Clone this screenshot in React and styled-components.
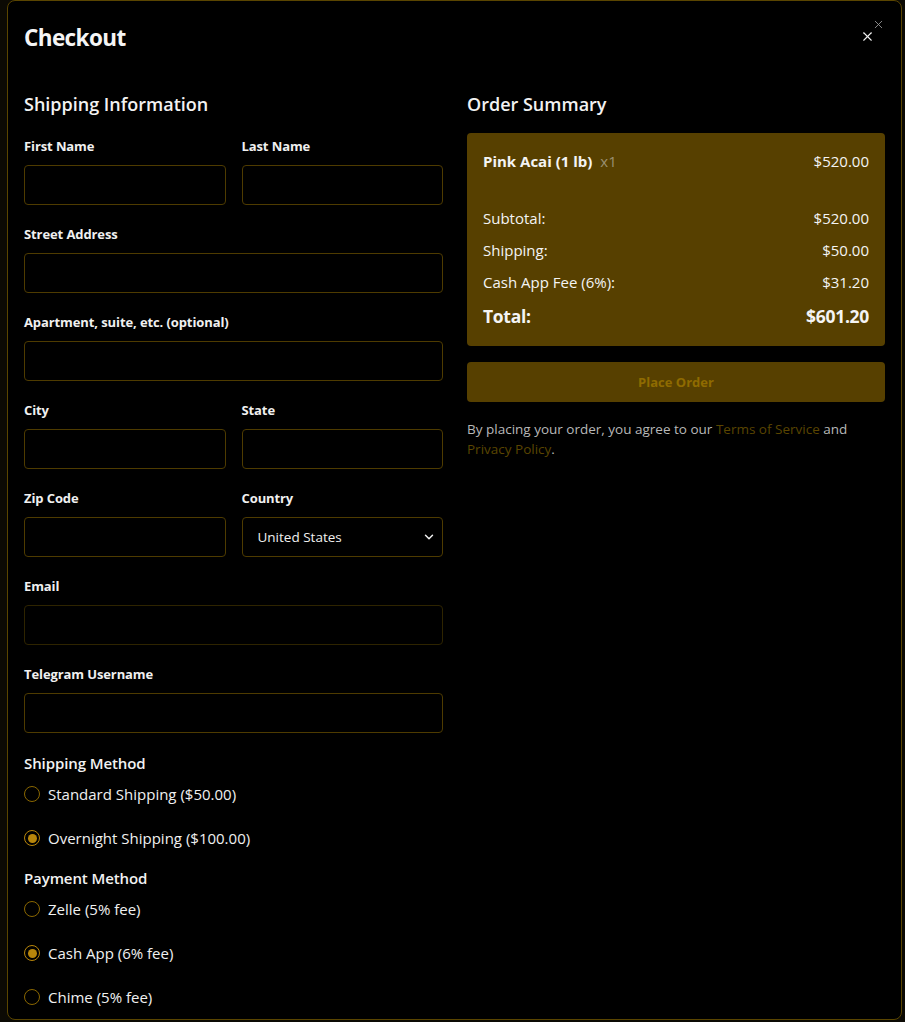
import React from 'react'
import styled, { createGlobalStyle } from 'styled-components'
import { X, ChevronDown } from 'lucide-react'

const Global = createGlobalStyle`
  html, body { margin: 0; padding: 0; }
  body {
    background: #0c0a04;
    font-family: 'Open Sans', 'Noto Sans', sans-serif;
    color: #f2f2f2;
  }
  * { box-sizing: border-box; }
`

const Overlay = styled.div`
  height: 1022px;
  padding-left: 7px;
  padding-right: 3px;
  overflow: hidden;
`

const Modal = styled.div`
  position: relative;
  height: 1020px;
  background: #000;
  border: 1px solid #5a4500;
  border-radius: 8px;
  padding: 20px 16px 0 16px;
  overflow: hidden;
`

const Title = styled.h1`
  margin: 0;
  font-size: 22.5px;
  line-height: 34px;
  font-weight: 700;
  letter-spacing: -0.6px;
  color: #f5f5f5;
`

const CloseBtn = styled.button`
  position: absolute;
  top: ${p => p.top}px;
  right: ${p => p.right}px;
  background: none;
  border: 0;
  padding: 0;
  display: flex;
  color: ${p => p.color};
`

const Columns = styled.div`
  display: grid;
  grid-template-columns: 419px 418px;
  column-gap: 24px;
  margin-top: 37px;
  align-items: start;
`

const Heading = styled.h2`
  margin: 0 0 ${p => p.mb || 21}px 0;
  font-size: 18px;
  line-height: 24px;
  font-weight: 600;
  color: #f2f2f2;
`

const FieldRow = styled.div`
  display: grid;
  grid-template-columns: ${p => (p.split ? '1fr 1fr' : '1fr')};
  column-gap: 16px;
  margin-bottom: 20px;
`

const Field = styled.label`
  display: flex;
  flex-direction: column;
  position: relative;
`

const Label = styled.span`
  font-size: 13px;
  line-height: 18px;
  font-weight: 700;
  letter-spacing: -0.1px;
  color: #f0f0f0;
  margin-bottom: 10px;
`

const Input = styled.input`
  height: 40px;
  background: #000;
  border: 1px solid ${p => (p.dim ? '#2e2400' : '#4e3b00')};
  border-radius: 4px;
  padding: 0 12px;
  color: #fff;
  font-family: inherit;
  font-size: 13px;
  outline: none;
`

const Select = styled.select`
  height: 40px;
  appearance: none;
  background: #000;
  border: 1px solid #4e3b00;
  border-radius: 4px;
  padding: 0 15px;
  color: #f0f0f0;
  font-family: inherit;
  font-size: 13.5px;
  outline: none;
`

const Chevron = styled(ChevronDown)`
  position: absolute;
  right: 7px;
  bottom: 13px;
  color: #f0f0f0;
  pointer-events: none;
`

const SubHeading = styled.h3`
  margin: 0 0 9px 0;
  font-size: 15px;
  line-height: 20px;
  font-weight: 600;
  letter-spacing: -0.1px;
  color: #f2f2f2;
`

const RadioGroup = styled.div`
  display: flex;
  flex-direction: column;
  gap: 20px;
  margin-bottom: 18px;
`

const RadioRow = styled.label`
  display: flex;
  align-items: center;
  height: 24px;
  gap: 8px;
  font-size: 15px;
  color: #f0f0f0;
`

const RadioDot = styled.span`
  width: 16px;
  height: 16px;
  border-radius: 50%;
  border: 1.5px solid ${p => (p.checked ? '#b8860b' : '#8a6700')};
  display: flex;
  align-items: center;
  justify-content: center;
  &::after {
    content: '';
    width: 9px;
    height: 9px;
    border-radius: 50%;
    background: ${p => (p.checked ? '#b8860b' : 'transparent')};
  }
`

const SummaryBox = styled.div`
  background: #574000;
  border-radius: 4px;
  padding: 16px;
`

const Line = styled.div`
  display: flex;
  justify-content: space-between;
  align-items: center;
  height: ${p => (p.total ? 28 : 24)}px;
  margin-top: ${p => p.mt || 0}px;
  font-size: ${p => (p.total ? 17.5 : 15)}px;
  font-weight: ${p => (p.total || p.item ? 700 : 400)};
  letter-spacing: ${p => (p.total ? -0.3 : 0)}px;
  color: #f4f4f4;
`

const Price = styled.span`
  font-weight: 400;
`

const Qty = styled.span`
  color: #9a8f70;
  font-weight: 400;
  margin-left: 8px;
`

const PlaceOrder = styled.button`
  width: 100%;
  height: 40px;
  margin-top: 16px;
  background: #574000;
  border: 0;
  border-radius: 4px;
  color: #8f6b00;
  font-family: inherit;
  font-size: 13px;
  font-weight: 700;
`

const Terms = styled.p`
  margin: 17px 0 0 0;
  font-size: 13.5px;
  line-height: 20px;
  color: #b8b8b8;
`

const Link = styled.a`
  color: #5a4500;
  text-decoration: none;
`

const Radio = ({ checked, children }) => (
  <RadioRow>
    <RadioDot checked={checked} />
    {children}
  </RadioRow>
)

const TextField = ({ label, dim }) => (
  <Field>
    <Label>{label}</Label>
    <Input dim={dim} />
  </Field>
)

export default function App() {
  return (
    <>
      <Global />
      <Overlay>
        <Modal>
          <Title>Checkout</Title>
          <CloseBtn top={17} right={16} color="#9a9a9a">
            <X size={13} strokeWidth={1.6} />
          </CloseBtn>
          <CloseBtn top={28} right={26} color="#f0f0f0">
            <X size={15} strokeWidth={1.8} />
          </CloseBtn>

          <Columns>
            <div>
              <Heading>Shipping Information</Heading>
              <FieldRow split>
                <TextField label="First Name" />
                <TextField label="Last Name" />
              </FieldRow>
              <FieldRow>
                <TextField label="Street Address" />
              </FieldRow>
              <FieldRow>
                <TextField label="Apartment, suite, etc. (optional)" />
              </FieldRow>
              <FieldRow split>
                <TextField label="City" />
                <TextField label="State" />
              </FieldRow>
              <FieldRow split>
                <TextField label="Zip Code" />
                <Field>
                  <Label>Country</Label>
                  <Select defaultValue="US">
                    <option value="US">United States</option>
                  </Select>
                  <Chevron size={14} strokeWidth={2.5} />
                </Field>
              </FieldRow>
              <FieldRow>
                <TextField label="Email" dim />
              </FieldRow>
              <FieldRow>
                <TextField label="Telegram Username" />
              </FieldRow>

              <SubHeading>Shipping Method</SubHeading>
              <RadioGroup>
                <Radio>Standard Shipping ($50.00)</Radio>
                <Radio checked>Overnight Shipping ($100.00)</Radio>
              </RadioGroup>

              <SubHeading>Payment Method</SubHeading>
              <RadioGroup>
                <Radio>Zelle (5% fee)</Radio>
                <Radio checked>Cash App (6% fee)</Radio>
                <Radio>Chime (5% fee)</Radio>
              </RadioGroup>
            </div>

            <div>
              <Heading mb={17}>Order Summary</Heading>
              <SummaryBox>
                <Line item>
                  <span>Pink Acai (1 lb)<Qty>x1</Qty></span>
                  <Price>$520.00</Price>
                </Line>
                <Line mt={33}>
                  <span>Subtotal:</span>
                  <span>$520.00</span>
                </Line>
                <Line mt={8}>
                  <span>Shipping:</span>
                  <span>$50.00</span>
                </Line>
                <Line mt={8}>
                  <span>Cash App Fee (6%):</span>
                  <span>$31.20</span>
                </Line>
                <Line total mt={8}>
                  <span>Total:</span>
                  <span>$601.20</span>
                </Line>
              </SummaryBox>
              <PlaceOrder>Place Order</PlaceOrder>
              <Terms>
                By placing your order, you agree to our <Link href="#">Terms of Service</Link> and{' '}
                <Link href="#">Privacy Policy</Link>.
              </Terms>
            </div>
          </Columns>
        </Modal>
      </Overlay>
    </>
  )
}
